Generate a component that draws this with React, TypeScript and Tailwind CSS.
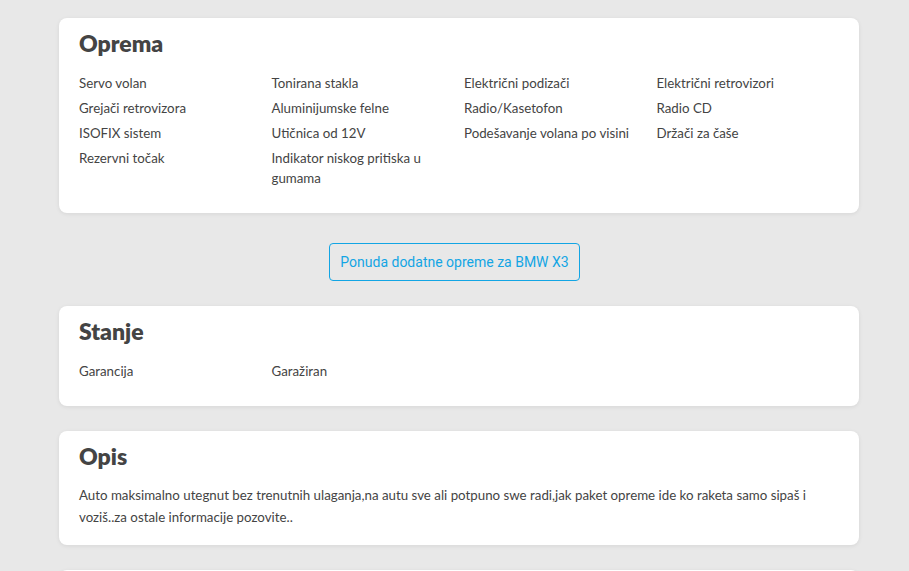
const oprema = [
  "Servo volan",
  "Tonirana stakla",
  "Električni podizači",
  "Električni retrovizori",
  "Grejači retrovizora",
  "Aluminijumske felne",
  "Radio/Kasetofon",
  "Radio CD",
  "ISOFIX sistem",
  "Utičnica od 12V",
  "Podešavanje volana po visini",
  "Držači za čaše",
  "Rezervni točak",
  "Indikator niskog pritiska u gumama",
];

const stanje = ["Garancija", "Garažiran"];

function Card({ title, children }: { title?: string; children: React.ReactNode }) {
  return (
    <div className="ml-[59px] w-[800px] rounded-lg bg-white pt-[9px] pb-[20px] pl-[20px] pr-[10px] shadow-[0_1px_4px_rgba(0,0,0,0.08)]">
      {title && (
        <h2 className="mb-[14px] text-[23px] font-extrabold leading-[32px] text-[#444]">{title}</h2>
      )}
      {children}
    </div>
  );
}

function FeatureGrid({ items }: { items: string[] }) {
  return (
    <div className="grid grid-cols-4">
      {items.map((item) => (
        <div key={item} className="mb-[5px] pr-[10px] text-[13.3px] leading-[20px] text-[#444]">
          {item}
        </div>
      ))}
    </div>
  );
}

export default function App() {
  return (
    <div
      className="min-h-screen bg-[#e8e8e8] pt-[18px] pb-[25px]"
      style={{ fontFamily: "Lato, 'Noto Sans', sans-serif" }}
    >
      <Card title="Oprema">
        <FeatureGrid items={oprema} />
      </Card>

      <div className="mt-[30px] mb-[25px] flex justify-center">
        <button
          type="button"
          className="h-[38px] rounded-[4px] border border-[#12a5e4] bg-transparent px-[10px] text-[14px] text-[#12a5e4]"
          style={{ fontFamily: "Roboto, sans-serif" }}
        >
          Ponuda dodatne opreme za BMW X3
        </button>
      </div>

      <Card title="Stanje">
        <FeatureGrid items={stanje} />
      </Card>

      <div className="h-[25px]" />

      <Card title="Opis">
        <p className="-mt-[2px] -mb-[3px] pr-[10px] text-[13.3px] leading-[22px] text-[#444]">
          Auto maksimalno utegnut bez trenutnih ulaganja,na autu sve ali potpuno swe radi,jak paket opreme ide ko raketa samo sipaš i voziš..za ostale informacije pozovite..
        </p>
      </Card>

      <div className="h-[25px]" />

      <Card>
        <div className="h-[80px]" />
      </Card>
    </div>
  );
}
